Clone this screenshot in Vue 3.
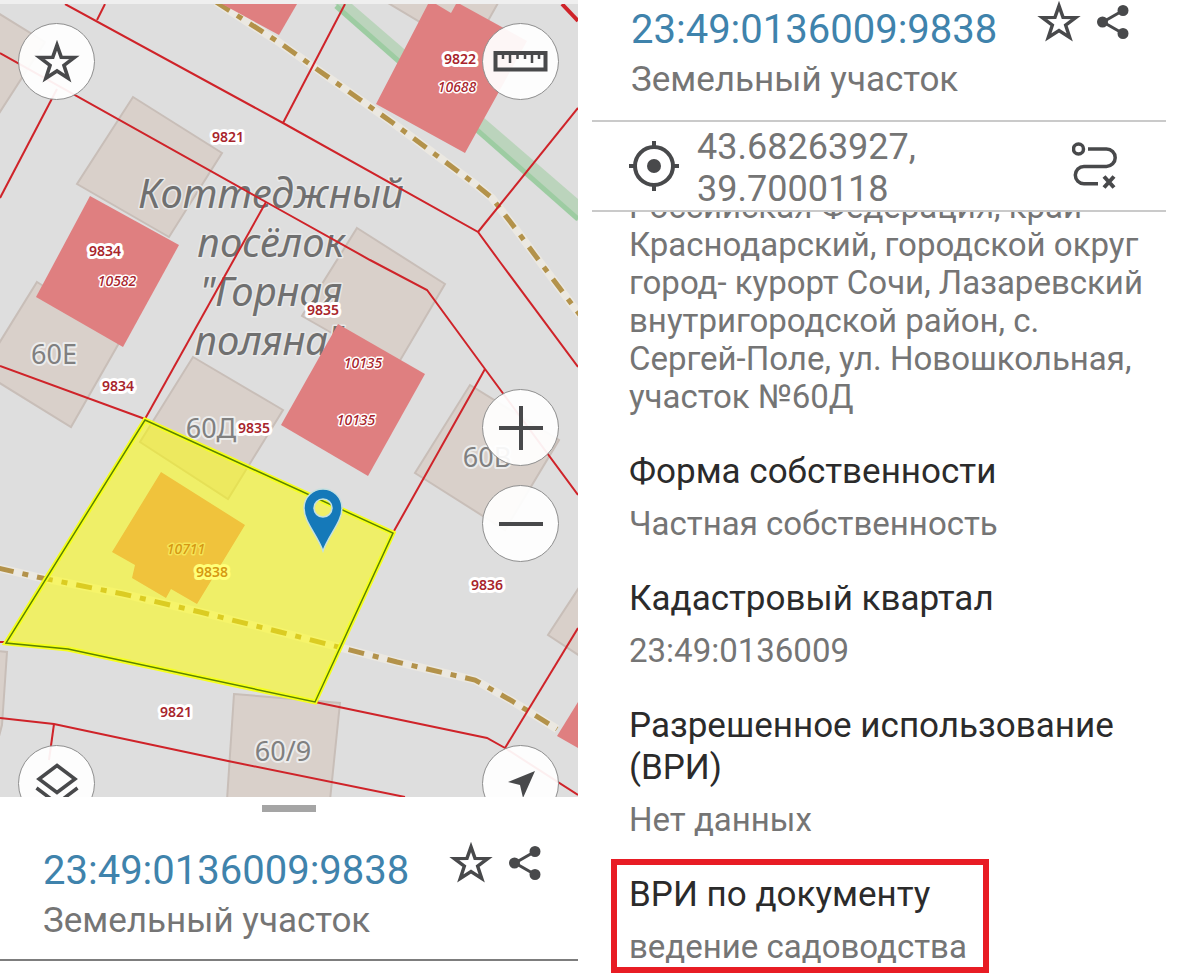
<template>
  <main class="page">
    <!-- Карта и карточка участка -->
    <section class="map-screen">
      <div class="map">
        <svg class="map-canvas" viewBox="0 4 578 793" role="img" aria-label="Кадастровая карта">
          <rect x="0" y="4" width="578" height="793" fill="#dedede" />
          <polygon points="335,4 352,4 578,199 578,221" fill="#bbd4bc" />
          <path d="M336 6 578 219" class="green-edge" />

          <polygon v-for="p in houses" :key="p" :points="p" class="house" />

          <g v-for="p in roads" :key="p">
            <path :d="p" class="road-casing" />
            <path :d="p" class="road" />
          </g>

          <text v-for="t in places" :key="t.text" :x="t.x" :y="t.y" class="place">{{ t.text }}</text>
          <text v-for="t in houseNumbers" :key="t.text" :x="t.x" :y="t.y" class="house-number">{{ t.text }}</text>

          <polygon v-for="p in buildings" :key="p" :points="p" class="building" />
          <path v-for="p in borders" :key="p" :d="p" class="border-line" />
          <path d="M562 4 578 21" class="border-line thick" />

          <text
            v-for="(t, i) in labels"
            :key="i"
            :x="t.x"
            :y="t.y"
            class="label"
            :class="{ oks: t.oks, inner: t.inner }"
          >{{ t.text }}</text>

          <!-- Выбранный участок -->
          <polygon :points="selected" class="selected-fill" />
          <polygon :points="selected" class="selected-glow" />
          <polygon :points="selected" class="selected-line" />

          <path
            d="M323 551C317 534 304 522 304 508a19 19 0 0 1 38 0c0 14-13 26-19 43zM314 508a9 9 0 1 0 18 0a9 9 0 1 0-18 0z"
            fill="#1579b9"
            fill-rule="evenodd"
            stroke="#c4e0e0"
            stroke-width="1.5"
          />
        </svg>

        <div class="controls">
          <button class="round star" type="button" aria-label="Избранное">
            <svg viewBox="0 0 40 40" width="48" height="48">
              <path :d="starPath" class="star-shape" />
            </svg>
          </button>
          <button class="round ruler" type="button" aria-label="Линейка">
            <svg viewBox="0 0 56 24" width="56" height="24">
              <path d="M2.5 3h50v16.500h-50z" fill="none" stroke="#48494b" stroke-width="4" />
              <path d="M10 4v5M17 4v9M24.500 4v5M32 4v5M39 4v9M46 4v5" stroke="#48494b" stroke-width="2.500" />
            </svg>
          </button>
          <button class="round plus" type="button" aria-label="Приблизить">
            <svg viewBox="0 0 44 44" width="44" height="44">
              <path d="M0 22h44M22 0v44" stroke="#48494b" stroke-width="4" />
            </svg>
          </button>
          <button class="round minus" type="button" aria-label="Отдалить">
            <svg viewBox="0 0 44 44" width="44" height="44">
              <path d="M0 22h44" stroke="#48494b" stroke-width="4" />
            </svg>
          </button>
          <button class="round layers" type="button" aria-label="Слои">
            <svg viewBox="0 0 44 44" width="44" height="44">
              <g fill="none" stroke="#48494b" stroke-width="3.500">
                <path d="M22 3.500 40 17 22 30.500 4 17z" />
                <path d="M1.500 26 22 41.500 42.500 26" />
              </g>
            </svg>
          </button>
          <button class="round locate" type="button" aria-label="Моё местоположение">
            <svg viewBox="0 0 30 30" width="30" height="30">
              <path d="M29 2 17 29 14 16 2 13z" fill="#48494b" />
            </svg>
          </button>
        </div>
      </div>

      <div class="sheet">
        <div class="handle"></div>
        <header class="heading">
          <h2 class="number">{{ cadNumber }}</h2>
          <div class="actions">
            <button type="button" aria-label="В избранное">
              <svg viewBox="0 0 40 40" width="46" height="46">
                <path :d="starPath" class="star-shape" />
              </svg>
            </button>
            <button type="button" aria-label="Поделиться">
              <svg viewBox="0 0 34 36" width="34" height="36">
                <path d="M27 6.500 7 18l20 11.500" class="share-line" />
                <path :d="shareDots" fill="#48494b" />
              </svg>
            </button>
          </div>
        </header>
        <p class="kind">Земельный участок</p>
      </div>
    </section>

    <!-- Подробные сведения -->
    <section class="info-screen">
      <div class="info-head">
        <header class="heading">
          <h1 class="number">{{ cadNumber }}</h1>
          <div class="actions">
            <button type="button" aria-label="В избранное">
              <svg viewBox="0 0 40 40" width="46" height="46">
                <path :d="starPath" class="star-shape" />
              </svg>
            </button>
            <button type="button" aria-label="Поделиться">
              <svg viewBox="0 0 34 36" width="34" height="36">
                <path d="M27 6.500 7 18l20 11.500" class="share-line" />
                <path :d="shareDots" fill="#48494b" />
              </svg>
            </button>
          </div>
        </header>
        <p class="kind">Земельный участок</p>
      </div>

      <div class="coords">
        <svg class="coords-icon" viewBox="0 0 50 50" width="50" height="50" aria-hidden="true">
          <circle cx="25" cy="25" r="19" fill="none" stroke="#48494b" stroke-width="4" />
          <circle cx="25" cy="25" r="7" fill="#48494b" />
          <path d="M25 0v7M25 43v7M0 25h7M43 25h7" stroke="#48494b" stroke-width="4" />
        </svg>
        <p class="coords-text">43.68263927,<br />39.7000118</p>
        <button class="coords-icon" type="button" aria-label="Маршрут">
          <svg viewBox="0 0 48 48" width="48" height="48">
            <g fill="none" stroke="#48494b" stroke-width="3.500">
              <circle cx="6.500" cy="7" r="5" />
              <path d="M16 7h18.500a8.700 8.700 0 0 1 0 17.400H12a8.700 8.700 0 0 0 0 17.400h14" />
              <path d="m32 34.500 10 11m0-11-10 11" stroke-width="4" />
            </g>
          </svg>
        </button>
      </div>

      <div class="details">
        <p class="value address">
          Российская Федерация, край<br />
          Краснодарский, городской округ<br />
          город- курорт Сочи, Лазаревский<br />
          внутригородской район, с.<br />
          Сергей-Поле, ул. Новошкольная,<br />
          участок №60Д
        </p>
        <div
          v-for="item in details"
          :key="item.title"
          class="item"
          :class="{ marked: item.marked }"
        >
          <h3 class="title">{{ item.title }}</h3>
          <p class="value">{{ item.value }}</p>
        </div>
      </div>
    </section>
  </main>
</template>

<script setup>
const cadNumber = "23:49:0136009:9838";

const details = [
  { title: "Форма собственности", value: "Частная собственность" },
  { title: "Кадастровый квартал", value: "23:49:0136009" },
  { title: "Разрешенное использование (ВРИ)", value: "Нет данных" },
  { title: "ВРИ по документу", value: "ведение садоводства", marked: true },
];

const starPath =
  "M20 6 23.500 16 34.500 16.200 25.800 22.800 29.300 33.500 20 27.500 10.700 33.500 14.200 22.800 5.500 16.200 16.500 16z";
const shareDots =
  "M21.500 6.500a5.500 5.500 0 1 0 11 0a5.500 5.500 0 1 0-11 0M1 18a5.500 5.500 0 1 0 11 0a5.500 5.500 0 1 0-11 0M21.500 29.500a5.500 5.500 0 1 0 11 0a5.500 5.500 0 1 0-11 0";

// Контуры домов подложки
const houses = [
  "-2,13 45,42 -2,115",
  "133,97 222,153 169,237 77,184",
  "37,282 123,336 71,427 -2,382 -2,345",
  "193,357 283,410 228,499 140,442",
  "357,228 445,284 395,369 302,316",
  "470,385 559,440 505,530 415,473",
  "234,694 340,703 330,800 227,800",
  "-2,651 7,652 2,725 -2,740",
  "580,586 548,635 580,656",
  "388,3 498,3 480,35 430,28",
];

// Объекты капитального строительства
const buildings = [
  "222,4 297,4 279,35",
  "90,196 179,245 123,347 36,297",
  "338,324 425,374 368,476 281,425",
  "428,4 436,4 451,13 456,4 460,4 527,41 465,153 376,104",
  "578,702 557,736 578,748",
  "161,472 245,525 197,604 171,589 166,598 132,578 135,565 112,552",
];

const roads = [
  "M216 2 280 43 393 123 475 184 492 198 515 228 540 262 580 315",
  "M-2 568 37 577 123 594 200 612 280 632 397 662 475 680 512 701 557 729",
];

const borders = [
  "M65 4 283 123 478 232 500 262 578 367",
  "M105 4 97 20",
  "M345 4 283 123",
  "M478 232 578 108",
  "M0 53 266 202 370 260 427 290 485 369 578 495",
  "M57 89 0 198",
  "M266 202 145 419",
  "M0 366 145 419",
  "M485 369 394 531",
  "M0 642H6",
  "M0 718 54 724 228 761 405 797",
  "M54 724 49 760",
  "M315 702 487 738 505 748 578 795",
  "M505 748 578 628",
];

const selected = "145,420 393,533 315,702 68,649 6,643";

const places = [
  { text: "Коттеджный", x: 271, y: 208 },
  { text: "посёлок", x: 271, y: 257 },
  { text: "\"Горная", x: 271, y: 306 },
  { text: "поляна\"", x: 269, y: 355 },
];

const houseNumbers = [
  { text: "60Е", x: 54, y: 364 },
  { text: "60Д", x: 211, y: 438 },
  { text: "60В", x: 487, y: 467 },
  { text: "60/9", x: 283, y: 761 },
];

const labels = [
  { text: "9821", x: 228, y: 142 },
  { text: "9822", x: 460, y: 64 },
  { text: "10688", x: 457, y: 92, oks: true },
  { text: "9834", x: 105, y: 256 },
  { text: "10582", x: 117, y: 286, oks: true },
  { text: "9835", x: 323, y: 315 },
  { text: "10135", x: 363, y: 368, oks: true },
  { text: "10135", x: 356, y: 425, oks: true },
  { text: "9834", x: 118, y: 391 },
  { text: "9835", x: 254, y: 433 },
  { text: "10711", x: 186, y: 554, oks: true, inner: true },
  { text: "9838", x: 212, y: 577 },
  { text: "9836", x: 487, y: 590 },
  { text: "9821", x: 176, y: 717 },
];
</script>

<style>
body {
  margin: 0;
  background: #fff;
}
</style>

<style scoped>
.page {
  display: grid;
  grid-template-columns: 578fr 574fr;
  column-gap: 14px;
  padding-right: 34px;
  font-family: Roboto, "Noto Sans", sans-serif;
  color: #757575;
}

h1,
h2,
h3,
p {
  margin: 0;
  font-weight: 400;
}

button {
  display: flex;
  align-items: center;
  justify-content: center;
  padding: 0;
  border: none;
  background: none;
  cursor: pointer;
}

/* Карта */
.map {
  position: relative;
  overflow: hidden;
  border-top: 4px solid #efefef;
}

.map-canvas {
  display: block;
  width: 100%;
  height: auto;
}

.house {
  fill: #d9d0ca;
  stroke: #c8beb8;
  stroke-width: 2;
}

.building {
  fill: #df7f80;
}

.green-edge {
  fill: none;
  stroke: #9dcca2;
  stroke-width: 5;
}

.road-casing {
  fill: none;
  stroke: #ebe8e1;
  stroke-width: 8;
}

.road {
  fill: none;
  stroke: #b3924a;
  stroke-width: 5;
  stroke-dasharray: 16 9 6 9;
}

.border-line {
  fill: none;
  stroke: #cf2329;
  stroke-width: 2;
}

.border-line.thick {
  stroke-width: 4;
}

.place,
.house-number,
.label {
  font-family: "Noto Sans", "Open Sans", sans-serif;
  text-anchor: middle;
  paint-order: stroke;
  stroke-linejoin: round;
}

.place {
  font-size: 40px;
  font-style: italic;
  fill: #707070;
  stroke: #e8e8e8;
  stroke-width: 3;
}

.house-number {
  font-size: 27px;
  fill: #808080;
  stroke: #ececec;
  stroke-width: 4;
}

.label {
  font-size: 14px;
  font-weight: 600;
  fill: #a8242b;
  stroke: #fff;
  stroke-width: 6;
}

.label.oks {
  font-style: italic;
  font-weight: 500;
  stroke-width: 3;
}

.label.inner {
  stroke: #e9c3b4;
}

.selected-fill {
  fill: #ffff00;
  fill-opacity: 0.53;
}

.selected-glow {
  fill: none;
  stroke: #f6ff1c;
  stroke-width: 5;
}

.selected-line {
  fill: none;
  stroke: #5c8400;
  stroke-width: 1.5;
}

/* Кнопки поверх карты */
.controls {
  position: absolute;
  inset: 0;
}

.round {
  position: absolute;
  width: 77px;
  height: 77px;
  border: 1px solid #8f8f8f;
  border-radius: 50%;
  background: rgba(255, 255, 255, 0.93);
}

.round.star {
  top: 19px;
  left: 18px;
}

.round.ruler {
  top: 19px;
  right: 19px;
}

.round.plus {
  top: 385px;
  right: 19px;
}

.round.minus {
  top: 481px;
  right: 19px;
}

.round.layers {
  bottom: -25px;
  left: 18px;
}

.round.locate {
  bottom: -25px;
  right: 19px;
}

.star-shape {
  fill: none;
  stroke: #48494b;
  stroke-width: 3;
}

.share-line {
  fill: none;
  stroke: #48494b;
  stroke-width: 3;
}

/* Карточка под картой */
.sheet {
  padding: 8px 0 12px;
  border-bottom: 2px solid #7d7d7d;
}

.handle {
  width: 54px;
  height: 7px;
  margin: 0 auto 35px;
  background: #a5a5a5;
}

.heading {
  display: flex;
  align-items: flex-start;
  justify-content: space-between;
  height: 48px;
  padding: 0 36px 0 43px;
}

.number {
  font-size: 40px;
  line-height: 48px;
  color: #3f83ac;
}

.actions {
  display: flex;
  align-items: center;
  gap: 14px;
  margin-top: -7px;
}

.kind {
  padding-left: 43px;
  font-size: 35px;
  line-height: 52px;
}

/* Сведения об участке */
.info-head {
  padding: 6px 0 14px;
}

.info-head .heading,
.info-head .kind {
  padding-left: 39px;
}

.coords {
  display: flex;
  align-items: center;
  padding: 4px 46px 0 37px;
  border-top: 2px solid #cacaca;
  border-bottom: 2px solid #cacaca;
}

.coords-icon {
  margin-bottom: 4px;
}

.coords-text {
  flex: 1;
  padding-left: 18px;
  font-size: 36px;
  line-height: 42px;
}

.details {
  overflow: hidden;
  padding-left: 37px;
}

.address {
  margin-top: -24px;
}

.item {
  margin-top: 35px;
}

.title {
  margin-bottom: 12px;
  font-size: 35px;
  line-height: 42px;
  color: #2b2b2b;
}

.value {
  font-size: 33px;
  line-height: 38px;
}

.item.marked {
  width: fit-content;
  margin: 20px 0 0 -18px;
  padding: 9px 16px 1px 12px;
  border: 6px solid #e81c24;
}
</style>
